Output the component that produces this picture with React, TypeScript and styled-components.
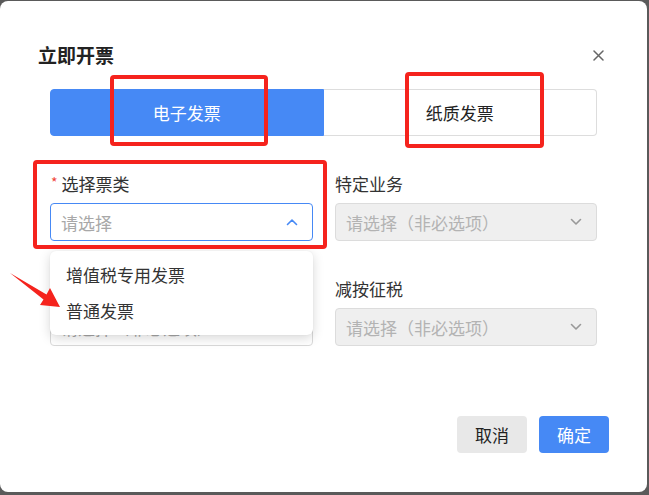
import React from "react";
import styled, { createGlobalStyle } from "styled-components";

const Global = createGlobalStyle`
  html, body { margin: 0; padding: 0; }
  body {
    font-family: "Noto Sans CJK SC", "Noto Sans", sans-serif;
    background: #5a5a5a;
  }
  * { box-sizing: border-box; }
`;

const Page = styled.div`
  width: 649px;
  height: 495px;
  padding-top: 1px;
  background: #5a5a5a;
  overflow: hidden;
`;

const Dialog = styled.div`
  position: relative;
  width: 647px;
  height: 491px;
  background: #ffffff;
  border-radius: 8px;
  display: flex;
  flex-direction: column;
`;

const Header = styled.div`
  height: 26px;
  margin-top: 41px;
  padding: 0 42px 0 38px;
  display: flex;
  align-items: center;
  justify-content: space-between;
`;

const Title = styled.h2`
  margin: 0;
  font-size: 19px;
  font-weight: 700;
  color: #222;
  line-height: 26px;
`;

const CloseBtn = styled.button`
  border: none;
  background: none;
  padding: 0;
  width: 14px;
  height: 14px;
  display: flex;
  align-items: center;
  justify-content: center;
  cursor: pointer;
`;

const Tabs = styled.div`
  margin: 21px 50px 0 50px;
  height: 47px;
  display: grid;
  grid-template-columns: 1fr 1fr;
  border-radius: 4px;
`;

const Tab = styled.div<{ $active?: boolean }>`
  display: flex;
  align-items: center;
  justify-content: center;
  font-size: 17px;
  color: ${(p) => (p.$active ? "#ffffff" : "#222")};
  background: ${(p) => (p.$active ? "#4689f5" : "#ffffff")};
  border: 1px solid ${(p) => (p.$active ? "#4689f5" : "#dddddd")};
  border-left: ${(p) => (p.$active ? "1px solid #4689f5" : "none")};
  border-radius: ${(p) => (p.$active ? "4px 0 0 4px" : "0 4px 4px 0")};
`;

const Form = styled.div`
  margin: 37px 50px 0 50px;
  display: grid;
  grid-template-columns: 263px 262px;
  column-gap: 22px;
  row-gap: 37px;
`;

const Field = styled.div`
  position: relative;
  display: flex;
  flex-direction: column;
  gap: 8px;
`;

const Label = styled.div`
  font-size: 17px;
  line-height: 22px;
  height: 22px;
  color: #333;
  display: flex;
  align-items: center;
`;

const Star = styled.span`
  color: #f04438;
  font-size: 14px;
  margin-right: 4px;
  margin-left: 1px;
  position: relative;
  top: -2px;
`;

const Select = styled.div<{ $focused?: boolean; $disabled?: boolean }>`
  height: 38px;
  border-radius: 4px;
  border: 1px solid
    ${(p) => (p.$focused ? "#4689f5" : p.$disabled ? "#dcdcdc" : "#d9d9d9")};
  background: ${(p) => (p.$disabled ? "#efefef" : "#ffffff")};
  display: flex;
  align-items: center;
  justify-content: space-between;
  padding: 0 14px 0 10px;
  font-size: 17px;
  color: ${(p) => (p.$disabled ? "#b3b3b3" : "#a8a8a8")};
`;

const Dropdown = styled.div`
  position: absolute;
  left: 0;
  top: 78px;
  width: 263px;
  padding: 6px 0 6px 0;
  background: #ffffff;
  border-radius: 6px;
  box-shadow: 0 3px 12px rgba(0, 0, 0, 0.16), 0 0 2px rgba(0, 0, 0, 0.06);
  z-index: 2;
`;

const Option = styled.div`
  height: 36px;
  line-height: 36px;
  padding-left: 16px;
  font-size: 17px;
  color: #333;
`;

const Footer = styled.div`
  margin-top: auto;
  margin-bottom: 39px;
  padding-right: 38px;
  display: flex;
  justify-content: flex-end;
  gap: 12px;
`;

const Button = styled.button<{ $primary?: boolean }>`
  height: 37px;
  min-width: 68px;
  padding: 0 18px;
  border: none;
  border-radius: 4px;
  font-family: inherit;
  font-size: 17px;
  color: ${(p) => (p.$primary ? "#ffffff" : "#222")};
  background: ${(p) => (p.$primary ? "#4689f5" : "#e8e8e8")};
`;

const Mark = styled.div`
  position: absolute;
  border: 4px solid #f5231d;
  border-radius: 4px;
  pointer-events: none;
  z-index: 3;
`;

const Arrow = styled.svg`
  position: absolute;
  left: 0;
  top: 0;
  z-index: 3;
  pointer-events: none;
`;

const Chevron = ({ up, color }: { up?: boolean; color: string }) => (
  <svg width="12" height="8" viewBox="0 0 12 8">
    <path
      d={up ? "M1.5 6.5 L6 2 L10.5 6.5" : "M1.5 1.5 L6 6 L10.5 1.5"}
      fill="none"
      stroke={color}
      strokeWidth="1.6"
      strokeLinecap="round"
      strokeLinejoin="round"
    />
  </svg>
);

export default function App() {
  return (
    <>
      <Global />
      <Page>
        <Dialog>
          <Header>
            <Title>立即开票</Title>
            <CloseBtn aria-label="close">
              <svg width="11" height="11" viewBox="0 0 11 11">
                <path
                  d="M1 1 L10 10 M10 1 L1 10"
                  stroke="#666"
                  strokeWidth="1.5"
                  strokeLinecap="round"
                />
              </svg>
            </CloseBtn>
          </Header>

          <Tabs>
            <Tab $active>电子发票</Tab>
            <Tab>纸质发票</Tab>
          </Tabs>

          <Form>
            <Field>
              <Label>
                <Star>*</Star>选择票类
              </Label>
              <Select $focused>
                <span>请选择</span>
                <Chevron up color="#4689f5" />
              </Select>
              <Dropdown>
                <Option>增值税专用发票</Option>
                <Option>普通发票</Option>
              </Dropdown>
            </Field>
            <Field>
              <Label>特定业务</Label>
              <Select $disabled>
                <span>请选择（非必选项）</span>
                <Chevron color="#999" />
              </Select>
            </Field>
            <Field>
              <Label />
              <Select>
                <span>请选择（非必选项）</span>
                <Chevron color="#999" />
              </Select>
            </Field>
            <Field>
              <Label>减按征税</Label>
              <Select $disabled>
                <span>请选择（非必选项）</span>
                <Chevron color="#999" />
              </Select>
            </Field>
          </Form>

          <Footer>
            <Button>取消</Button>
            <Button $primary>确定</Button>
          </Footer>

          <Mark style={{ left: 110, top: 74, width: 158, height: 71 }} />
          <Mark style={{ left: 405, top: 71, width: 139, height: 76 }} />
          <Mark style={{ left: 33, top: 159, width: 294, height: 89 }} />

          <Arrow width="80" height="320" viewBox="0 0 80 320">
            <polygon
              points="10,272 46.5,293.5 50,287 60,306 40,304 43.5,298.5"
              fill="#f5231d"
            />
          </Arrow>
        </Dialog>
      </Page>
    </>
  );
}
